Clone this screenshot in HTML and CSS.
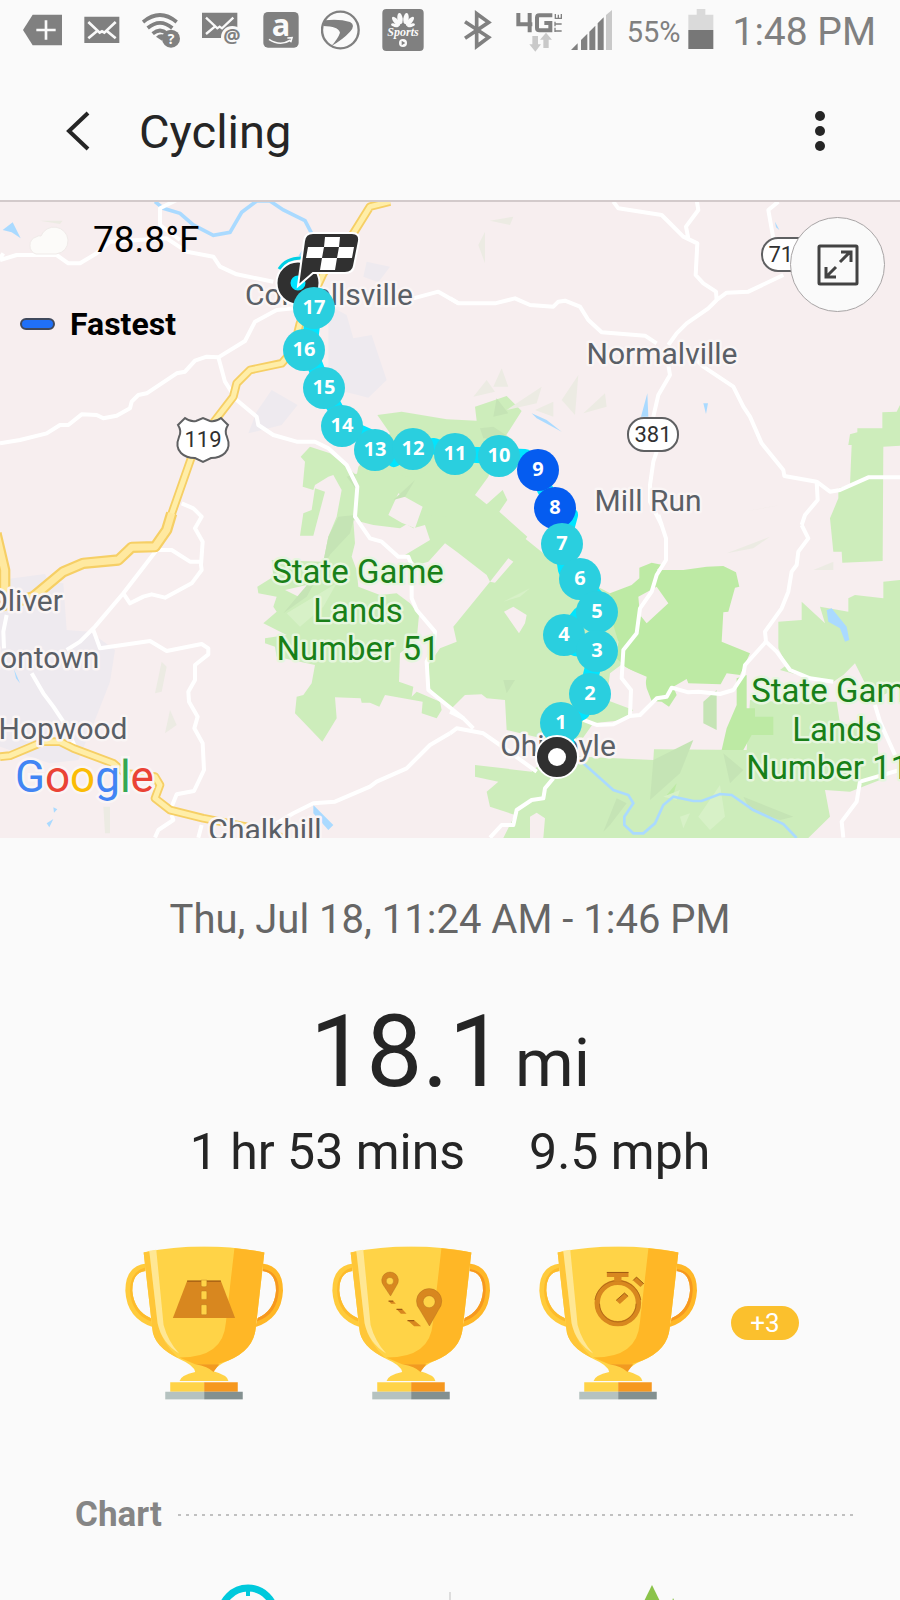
FILE: index.html
```html
<!DOCTYPE html>
<html lang="en">
<head>
    <meta charset="UTF-8">
    <meta name="viewport" content="width=device-width, initial-scale=1.0">
    <title>Cycling</title>
    <link rel="stylesheet" href="styles.css">
</head>
<body>
    <div class="app">
        <div class="status-bar">
            <div class="notifications">
                <svg width="39" height="44" viewBox="69 24 117 132"><path class="fill" d="M69 90L98 44H186V136H98Z"/><path class="cut" stroke-width="8" d="M109 90H167M138 61V119"/></svg>
                <svg width="36" height="44" viewBox="254 24 108 132"><path class="fill" d="M255 50H360V129H255Z"/><path class="cut" stroke-width="8" d="M267 66L301 98L308 94L315 98L349 66M267 115L297 90M349 115L319 90"/></svg>
                <svg width="38" height="44" viewBox="432 24 114 132"><path class="line" stroke-width="11" d="M435 66Q486 24 536 66M449 84Q486 53 523 84M464 101Q486 82 508 101"/><path class="fill" d="M474 110Q486 98 502 106L492 122Z"/><circle class="fill" cx="519" cy="116" r="27"/><text class="cut-text" x="519" y="131" font-size="42">?</text></svg>
                <svg width="39" height="44" viewBox="612 24 117 132"><path class="fill" d="M612 38H718V114H612Z"/><path class="cut" stroke-width="7" d="M624 53L658 85L665 80L672 85L706 53M624 102L654 77"/><circle cx="703" cy="112" r="34" fill="#fafafa"/><text class="gray-text" x="702" y="130" font-size="58">@</text></svg>
                <svg width="36" height="44" viewBox="794 24 108 132"><rect class="fill" x="795" y="36" width="106" height="107" rx="14"/><text class="cut-text" x="848" y="109" font-size="92">a</text><path class="cut" stroke-width="5" d="M812 118Q845 140 876 121M867 114L881 113L877 127"/></svg>
                <svg width="39" height="44" viewBox="969 24 117 132"><circle class="line" cx="1027" cy="90" r="55" stroke-width="7"/><path class="fill" d="M980 61Q1024 56 1056 66Q1074 76 1056 95Q1035 118 1000 138Q1020 116 1026 98Q1020 78 976 78Z"/></svg>
                <svg width="42" height="44" viewBox="1145 24 126 132"><rect class="fill" x="1146" y="27" width="124" height="126" rx="12"/><g fill="#fafafa"><ellipse cx="1199" cy="56" rx="8" ry="17" transform="rotate(-8 1199 56)"/><ellipse cx="1217" cy="56" rx="8" ry="17" transform="rotate(8 1217 56)"/><ellipse cx="1187" cy="64" rx="7" ry="17" transform="rotate(-40 1187 64)"/><ellipse cx="1229" cy="64" rx="7" ry="17" transform="rotate(40 1229 64)"/><ellipse cx="1184" cy="76" rx="5" ry="12" transform="rotate(-75 1184 76)"/><ellipse cx="1232" cy="76" rx="5" ry="12" transform="rotate(75 1232 76)"/><circle cx="1208" cy="129" r="12"/></g><path class="fill" d="M1204 122L1215 129L1204 136Z"/><text class="cut-text script" x="1208" y="108" font-size="36">Sports</text></svg>
            </div>
            <div class="system">
                <svg width="28" height="44" viewBox="45 24 84 132"><path class="line" stroke-width="11" d="M48 65L119 112L83 139V41L119 67L48 115"/></svg>
                <svg width="47" height="44" viewBox="203 24 141 132"><path class="line" stroke-width="12" d="M210 39V73H252M244 39V97M312 46H273Q266 46 266 53V84Q266 91 273 91H306V69H288"/><path class="line" stroke-width="4" d="M320 93H340M320 96V83M322 72H340M320 79V65M321 57V42M339 57V42M330 57V44M320 55H340"/><path fill="#c9c9c9" d="M252 108H269V133H278L261 155L243 133H252ZM285 144V119H275L293 98L311 119H301V144Z"/></svg>
                <svg width="42" height="44" viewBox="362 24 126 132"><path class="fill" d="M362 150L382 130V150ZM392 150V120L411 101V150ZM417 150V95L435 77V150ZM442 150V70L460 52V150Z"/><path fill="#c9c9c9" d="M467 150V45L485 30V150Z"/></svg>
                <span class="battery-level">55%</span>
                <svg width="26" height="44" viewBox="716 24 78 132"><path fill="#dadada" d="M742 27H768V44H792V90H717V44H742Z"/><path fill="#777" d="M717 90H792V147H717Z"/></svg>
                <time class="clock">1:48 PM</time>
            </div>
        </div>

        <header class="header">
            <button class="icon-button" aria-label="Back">
                <svg width="26" height="44" viewBox="0 0 26 44"><path d="M23 3L4 21L23 39" fill="none" stroke="#252525" stroke-width="4"/></svg>
            </button>
            <h1 class="title">Cycling</h1>
            <button class="icon-button" aria-label="More options">
                <svg width="12" height="44" viewBox="0 0 12 44"><g fill="#252525"><circle cx="6" cy="6" r="5"/><circle cx="6" cy="21" r="5"/><circle cx="6" cy="36" r="5"/></g></svg>
            </button>
        </header>

        <section class="map">
            <svg class="map-canvas" viewBox="0 2 900 636" preserveAspectRatio="xMidYMid slice">
                <g transform="scale(.33333)">
                    <!-- towns -->
                    <g fill="#eeeaef">
                        <path d="M1100 185L1170 200L1135 247L1090 230ZM985 315L1040 345L1060 415L1115 405L1160 540L1105 593L1035 575L985 525ZM815 570L893 615L845 675L745 700L770 635Z"/>
                        <path d="M0 1140L135 1122L145 1145L190 1150L200 1290L270 1295L345 1350L330 1445L285 1560L235 1680L150 1690L0 1640Z"/>
                    </g>
                    <!-- forest -->
                    <g fill="#cdedbb">
                        <path d="M1132 645L1205 635L1340 658L1430 662L1425 620L1520 588L1565 633L1500 735L1465 830L1425 885L1460 913L1508 870L1522 900L1498 935L1582 1010L1577 1017L1680 1100L1830 1180L1860 1240L1850 1370L1870 1390L1830 1420L1820 1500L1900 1530L1870 1560L1780 1570L1730 1640L1520 1590L1515 1500L1460 1495L1445 1483L1395 1485L1350 1530L1290 1465L1285 1395L1320 1345L1370 1325L1360 1280L1470 1145L1460 1125L1370 1055L1335 1030L1285 1085L1250 1095L1215 1065L1290 1020L1275 975L1240 985L1060 880L1075 800L1170 700Z"/>
                        <path d="M930 740L990 760L1040 800L1065 822L1150 810L1220 830L1350 800L1350 950L1265 945L1200 985L1120 975L1060 960L1065 1030L1055 1070L1070 1110L1075 1160L1140 1185L1190 1180L1230 1210L1257 1245L1250 1320L1200 1360L1197 1445L1240 1460L1235 1490L1250 1475L1320 1505L1325 1530L1310 1555L1265 1540L1268 1505L1155 1485L1138 1520L1110 1508L1085 1508L1082 1495L1005 1492L1010 1555L967 1625L885 1540L890 1490L910 1485L935 1450L945 1395L830 1370L825 1340L795 1330L795 1315L860 1305L790 1270L830 1235L820 1220L830 1190L775 1180L772 1160L820 1130L815 1080L970 1085L985 1010L1010 950L1025 870L1000 825L985 830L945 855L940 870L908 860L915 785L902 770Z"/>
                        <path d="M945 865L975 875L940 1007L900 1007L910 940L935 930Z"/>
                        <path d="M1425 1695L1595 1715L1650 1665L1750 1670L1960 1680L1962 1648L2240 1650L2250 1500L2335 1505L2510 1505L2520 1570L2630 1590L2640 1740L2550 1775L2475 1770L2490 1850L2425 1914L1510 1914L1545 1845L1470 1820L1460 1775L1495 1745L1425 1730Z"/>
                        <path d="M2335 1265L2405 1260L2405 1205L2475 1270L2460 1220L2545 1235L2545 1195L2565 1185L2650 1195L2650 1145L2700 1140V1460L2620 1500L2565 1390L2530 1425L2500 1445L2430 1435L2340 1410L2360 1395L2335 1345Z"/>
                        <path d="M2700 615L2690 635L2647 637V685H2572V697L2550 703L2545 735H2555L2550 855L2515 865V895L2490 955L2500 1055H2525L2527 1088L2648 1083L2650 740L2700 737Z"/>
                    </g>
                    <g fill="#bdeaa4">
                        <path d="M1830 1180L1895 1155L1918 1135L1918 1103L1955 1088L1988 1095L1970 1110H2050L2120 1100L2170 1098L2208 1117L2218 1160L2205 1163L2185 1235L2170 1237L2165 1325L2250 1360L2220 1425L2180 1420L2162 1453L2065 1450L2060 1437L2020 1460L2030 1485L2007 1520L1985 1505L1955 1503L1940 1465L1935 1435L1875 1400L1850 1375L1855 1325L1840 1275Z"/>
                        <path d="M2210 1435L2240 1425V1525H2265V1550H2320V1605H2255L2230 1650H2165L2180 1585L2210 1515Z"/>
                        <path d="M2000 1785L2030 1750L2020 1785Z"/>
                    </g>
                    <g fill="#f7eeef">
                        <path d="M1195 880L1268 920L1245 985L1205 968L1165 945ZM1915 1190L1970 1160L2005 1210L1940 1270L1920 1245ZM1512 1235L1540 1220L1580 1245L1575 1270L1557 1300ZM1470 1145L1525 1075L1540 1085L1485 1148ZM1590 1850L1610 1838L1635 1855L1630 1914H1590ZM855 1170L920 1155L905 1195ZM1850 1415L1870 1400L1940 1430L1935 1460L1880 1480Z"/>
                    </g>
                    <!-- relief -->
                    <g fill="#c5e4b5">
                        <path d="M1015 950L1065 945L1050 1000L970 1085L985 1010ZM1020 1010L920 1190L850 1240L900 1180L960 1110ZM1180 900L1245 840L1215 890ZM1040 830L1065 822L1070 870ZM1440 685L1480 680L1540 720L1450 715ZM1490 595L1525 640L1480 650Z"/>
                        <path d="M1510 1440H1545L1520 1480ZM1810 1895L1850 1795L1880 1810L1830 1875ZM1960 1680L2080 1620L2040 1720L1950 1800ZM2170 1660L2230 1710L2190 1750ZM2230 1790L2380 1850L2340 1860L2250 1830ZM2110 1505L2150 1470V1590L2110 1570Z"/>
                    </g>
                    <g fill="#ecebe3">
                        <path d="M120 62H188L180 72ZM1470 62L1540 50L1530 75ZM1435 135L1455 95V190ZM1420 590L1460 540L1485 575ZM1480 560L1505 505L1525 560ZM1520 630L1625 560L1610 610ZM1605 630L1660 605V650ZM1685 600L1735 525L1725 645ZM1750 640L1815 580L1820 620ZM2180 1060L2310 1010L2260 1045ZM2440 1110L2500 1085V1110ZM2230 935L2340 915L2290 925Z"/>
                        <path d="M485 1385L500 1400L485 1475L465 1480ZM510 1530L530 1575L495 1600ZM310 1820H330V1900H315Z"/>
                    </g>
                    <g fill="#d7f1c7"><path d="M1510 1205L1590 1165L1560 1190ZM2160 1755L2175 1850L2130 1890L2095 1850ZM2040 1850L2070 1840L2050 1885ZM1990 1790L2040 1770L2030 1800ZM900 1280L860 1240L1010 1150L970 1220Z"/></g>
                    <!-- water -->
                    <g fill="none" stroke="#aadaff" stroke-width="11">
                        <path d="M465 5L490 25L540 40L580 75L640 106L690 97L725 37L770 3H810L850 30L915 62L940 110L900 170" />
                        <path stroke-width="8" d="M1750 1690L1840 1770L1885 1785L1900 1810L1873 1850V1875L1900 1900H1930L1965 1870L1990 1815L2020 1790L2080 1803H2105L2160 1782L2195 1785L2260 1830L2350 1872L2390 1914"/>
                    </g>
                    <path fill="#aadaff" d="M8 90L38 67L62 115L35 97ZM1595 640L1640 660L1685 695L1610 655ZM1942 580L1945 650H1923ZM2110 610H2124L2118 642ZM2325 65L2338 90L2328 82ZM2480 1230L2495 1225L2540 1280L2548 1320L2535 1325L2520 1285L2485 1265ZM940 1815L1000 1875L985 1890L940 1840ZM160 1822L172 1828L162 1838ZM140 1870L160 1857L148 1882ZM42 1408L60 1450L48 1435Z"/>
                    <!-- local roads -->
                    <g fill="none" stroke="#fff" stroke-width="12" stroke-linejoin="round">
                        <g transform="translate(0 -15)">
                            <path d="M0 195L50 180H170L205 205H240L290 175L330 140L500 130L560 170L640 185L660 215L710 238L820 260M530 15L480 40V90L540 135M0 190L10 175"/>
                            <path d="M0 745L60 735L140 715L180 690H205L245 658L290 660L310 670L350 662L390 640L395 620L415 600L440 595L530 535L555 530L585 497L620 485L655 487L735 438L765 380L830 345L880 340M655 487L675 560L710 615L770 665L775 690L820 720L890 740H945L985 760L1040 810L1072 875L1065 965L1110 1030L1145 1040L1195 1085H1225L1235 1110V1210L1250 1245L1305 1310L1300 1360L1280 1400L1285 1485L1390 1570M1200 320L1240 310L1315 290L1375 325"/>
                            <path d="M545 925L580 940L605 965L585 1000L608 1040L603 1110L605 1125L575 1165L495 1208L455 1198L430 1205L390 1225L370 1195"/>
                        </g>
                        <g transform="translate(1350 -15)">
                            <path d="M0 310L25 325H135L195 310L240 330L310 335L325 320L345 317L390 335L415 375L455 412L585 422L620 445M490 20L505 40L635 60L700 125L742 145L737 240L760 265L798 290L800 315L775 340L710 385L680 415L655 450M800 315L830 293L895 290L1000 240M740 15L745 45L708 95L715 130M985 20L955 45L970 130"/>
                            <path d="M740 495L760 515L850 575L880 635L900 665L935 745L1000 825L1003 843L1100 860L1140 890L1170 885L1255 847H1350M1100 860L1103 915L1065 960L1055 990M655 510L660 540L625 600L610 665M620 770L610 800L600 870V920L635 990"/>
                        </g>
                        <g transform="translate(0 945)">
                            <path d="M470 105L370 235L285 335L240 380L200 405M470 105H515L570 140H600M280 345L300 400L450 378L500 408L605 387L625 400V418L585 450V495L565 530L567 560L593 605L583 640L608 685L612 765L582 828L530 838L515 875M515 900L520 915L475 945L465 968M605 930L595 968M20 300L10 350L12 400M95 475L130 535L160 575L190 620L225 695M1350 655L1290 690L1220 760L1130 800L1110 815L1005 860L940 865L880 895L830 925"/>
                        </g>
                        <g transform="translate(1350 945)">
                            <path d="M1055 30L1075 70L1045 110L1040 150L1025 170L1015 230L995 280L945 350L948 380L885 450L880 480L850 525L810 537L745 530L715 532L665 518L650 545L620 550L570 600L540 603L490 628L440 630L400 615M540 603L543 525L515 490L520 405L560 355L570 280L605 230L620 180L648 135V70L625 0M948 380L980 410L1020 465L1080 490L1150 500M1275 570L1290 620L1335 720L1350 740M1350 765L1230 800L1220 860L1175 920L1180 968M0 590L40 610L70 640M0 655L20 640L100 655L150 690L260 770M310 790L285 820L280 850L245 855L200 885L190 930L155 930L120 968"/>
                        </g>
                    </g>
                    <!-- highways -->
                    <g fill="none" stroke="#f6cf65" stroke-width="26" stroke-linejoin="round">
                        <path d="M1170 5L1110 20L1060 100L970 220L900 370L880 450L845 490L750 510L710 550L700 590L650 655L600 720L575 770L505 970M0 1670L30 1667L130 1625H180L220 1645L340 1690L375 1720L465 1730L480 1755L465 1795L510 1830L610 1855L740 1880L850 1914"/>
                        <path stroke-width="34" d="M515 940L500 990L465 1040L395 1042L355 1080L250 1090L190 1115L100 1190L0 1220M-12 1000L14 1110V1190"/>
                    </g>
                    <g fill="none" stroke="#ffeea8" stroke-width="15" stroke-linejoin="round">
                        <path d="M1170 5L1110 20L1060 100L970 220L900 370L880 450L845 490L750 510L710 550L700 590L650 655L600 720L575 770L505 970M0 1670L30 1667L130 1625H180L220 1645L340 1690L375 1720L465 1730L480 1755L465 1795L510 1830L610 1855L740 1880L850 1914"/>
                        <path stroke="#ffe9a0" stroke-width="21" d="M515 940L500 990L465 1040L395 1042L355 1080L250 1090L190 1115L100 1190L0 1220M-12 1000L14 1110V1190"/>
                    </g>
                </g>

                <!-- road signs -->
                <g class="shield">
                    <path d="M185 218Q190 222 196 221L203 218L210 221Q216 222 221 218L228 225Q224 231 227 237Q231 247 225 253Q220 258 211 258L203 262L195 258Q186 258 181 253Q175 247 179 237Q182 231 178 225Z"/>
                    <rect x="628" y="218" width="50" height="33" rx="16"/>
                    <rect x="762" y="38" width="52" height="33" rx="16"/>
                    <text x="203" y="247">119</text>
                    <text x="653" y="242">381</text>
                    <text x="787" y="62">711</text>
                </g>

                <g class="town">
                    <text x="329" y="105">Connellsville</text>
                    <text x="662" y="164">Normalville</text>
                    <text x="648" y="311">Mill Run</text>
                    <text x="25" y="411">Oliver</text>
                    <text x="28" y="468">Uniontown</text>
                    <text x="63" y="539">Hopwood</text>
                    <text x="265" y="640">Chalkhill</text>
                    <text x="558" y="556">Ohiopyle</text>
                </g>
                <g class="park">
                    <text x="358" y="383">State Game</text>
                    <text x="358" y="422">Lands</text>
                    <text x="358" y="460">Number 51</text>
                    <text x="837" y="502">State Game</text>
                    <text x="837" y="541">Lands</text>
                    <text x="837" y="579">Number 111</text>
                </g>
                <text class="google" x="15" y="592"><tspan fill="#4285f4">G</tspan><tspan fill="#ea4335">o</tspan><tspan fill="#fbbc05">o</tspan><tspan fill="#4285f4">g</tspan><tspan fill="#34a853">l</tspan><tspan fill="#ea4335">e</tspan></text>

                <!-- ride -->
                <path fill="none" stroke="#00e5ff" stroke-width="16" stroke-linejoin="round" d="M298 83L314 108L309 150L324 188L345 226L372 238L394 259L413 249L434 246L455 254L499 256L525 257L535 270L548 295L570 315L562 344L566 370L580 379L600 402L580 415L564 435L575 448L597 451L591 475L590 494L582 512L561 523L567 545L557 557"/>
                <circle cx="298" cy="83" r="15" fill="none" stroke="#fff" stroke-width="15"/>
                <path d="M279 69Q286 58 301 58" fill="none" stroke="#00cfe4" stroke-width="3"/>
                <circle cx="298" cy="83" r="14" fill="#00e5ff" stroke="#303030" stroke-width="13"/>
                <path d="M313 33H352Q360 33 359 41L354 66Q353 73 345 73H313L298 86L304 41Q305 33 313 33Z" fill="#303030" stroke="#fff" stroke-width="2"/>
                <path fill="#fff" fill-rule="evenodd" d="M325 37H340L339 47H354L352 58H337L335 70H320L322 58H306L308 47H324ZM324 47L322 58H337L339 47Z"/>
                <g class="pins">
                    <circle cx="314" cy="108" r="21"/><circle cx="304" cy="150" r="21"/><circle cx="324" cy="188" r="21"/><circle cx="342" cy="226" r="21"/><circle cx="375" cy="250" r="21"/><circle cx="413" cy="249" r="21"/><circle cx="455" cy="254" r="21"/><circle cx="499" cy="256" r="21"/>
                    <circle class="fastest" cx="538" cy="270" r="21"/><circle class="fastest" cx="555" cy="308" r="21"/>
                    <circle cx="562" cy="344" r="21"/><circle cx="580" cy="379" r="21"/><circle cx="597" cy="412" r="21"/><circle cx="564" cy="435" r="21"/><circle cx="597" cy="451" r="21"/><circle cx="590" cy="494" r="21"/><circle cx="561" cy="523" r="21"/>
                    <text x="314" y="114">17</text><text x="304" y="156">16</text><text x="324" y="194">15</text><text x="342" y="232">14</text><text x="375" y="256">13</text><text x="413" y="255">12</text><text x="455" y="260">11</text><text x="499" y="262">10</text><text x="538" y="276">9</text><text x="555" y="314">8</text><text x="562" y="350">7</text><text x="580" y="385">6</text><text x="597" y="418">5</text><text x="564" y="441">4</text><text x="597" y="457">3</text><text x="590" y="500">2</text><text x="561" y="529">1</text>
                </g>
                <circle cx="557" cy="557" r="21" fill="#303030" stroke="#fff" stroke-width="2"/>
                <circle cx="557" cy="557" r="9" fill="#fff"/>
            </svg>

            <div class="weather">
                <svg width="44" height="30" viewBox="0 0 44 30"><path d="M10 29A9 9 0 0 1 10 12Q13 10 15 11A14 14 0 0 1 42 15Q42 27 30 29Z" fill="#fcfbf9" stroke="#f0ebe9"/></svg>
                <span>78.8°F</span>
            </div>
            <div class="legend"><i class="legend-mark"></i><span>Fastest</span></div>
            <button class="expand" aria-label="Expand map">
                <svg width="42" height="42" viewBox="0 0 42 42"><g fill="none" stroke="#424242" stroke-width="3"><rect x="2" y="2" width="38" height="38" rx="1"/><path d="M23 18L33 8M24 8H34V18M19 23L9 33M9 23V33H19"/></g></svg>
            </button>
        </section>

        <main class="summary">
            <p class="date">Thu, Jul 18, 11:24 AM - 1:46 PM</p>
            <p class="distance"><span class="distance-value">18.1</span><span class="distance-unit">mi</span></p>
            <p class="pace"><span>1 hr 53 mins</span><span>9.5 mph</span></p>

            <svg width="0" height="0" class="defs">
                <symbol id="cup" viewBox="75 78 475 462">
                    <path d="M138 130Q76 138 76 212Q80 296 160 322L152 294Q102 272 97 212Q97 158 136 153Z" fill="#ffcb3c"/>
                    <path d="M136 142Q90 154 90 212Q94 284 156 305L152 294Q102 272 97 212Q97 158 136 153Z" fill="#fdbb2b"/>
                    <path d="M488 130Q550 138 550 212Q546 296 466 322L474 294Q524 272 529 212Q529 158 489 153Z" fill="#ffb726"/>
                    <path d="M489 147Q539 154 537 212Q534 282 472 304L474 294Q524 272 529 212Q529 158 489 153Z" fill="#f6981f"/>
                    <path d="M131 97Q220 79 313 79Q405 79 494 97L468 325Q462 390 386 422Q352 436 341 454Q384 466 386 483H239Q242 466 286 456Q282 436 240 418Q160 380 157 325Z" fill="#ffd347"/>
                    <path d="M404 84Q460 89 494 97L468 325Q462 390 386 422L352 433H286L238 413Q370 414 378 310Z" fill="#ffb726"/>
                    <path d="M131 97L148 93L173 310Q186 370 236 415Q160 380 157 325Z" fill="#ffc638"/>
                    <path d="M148 92L169 89L191 315Q204 364 238 401Q186 370 173 310Z" fill="#ffe794"/>
                    <path d="M286 433H358L341 456Q325 440 286 433Z" fill="#f29a20"/>
                    <path d="M211 487H313V516H211Z" fill="#ffd347"/><path d="M313 487H414V516H313Z" fill="#f6981f"/>
                    <path d="M196 516H313V539H196Z" fill="#b5c2c0"/><path d="M313 516H429V539H313Z" fill="#839090"/>
                </symbol>
            </svg>
            <div class="trophies">
                <svg width="158" height="154" viewBox="75 78 475 462">
                    <use href="#cup" x="75" y="78" width="475" height="462"/>
                    <path d="M262 182H363L406 294H219Z" fill="#d8871f"/><path d="M262 183H363" stroke="#9f5b13" stroke-width="4"/>
                    <g fill="#ffd347" stroke="#a86a1c" stroke-width="1"><path d="M304 180H321V196L317 200H308L304 196Z"/><rect x="304" y="213" width="17" height="25" rx="3"/><rect x="304" y="254" width="17" height="30" rx="3"/></g>
                </svg>
                <svg width="158" height="154" viewBox="75 78 475 462">
                    <use href="#cup" x="75" y="78" width="475" height="462"/>
                    <path fill="#d8871f" stroke="#a2601a" stroke-width="1" fill-rule="evenodd" d="M251 228L229 195A25 25 0 1 1 270 195ZM249 172A11 11 0 1 0 249 194A11 11 0 1 0 249 172ZM368 318L338 268A38 38 0 1 1 396 268ZM367 227A18 18 0 1 0 367 263A18 18 0 1 0 367 227Z"/>
                    <path fill="#d8871f" d="M245 243H259L267 251H253ZM269 267H286L299 281H282ZM302 301H322L343 319H322Z"/><path d="M245 243H259M269 268H286M302 302H322" stroke="#9f5b13" stroke-width="4"/>
                </svg>
                <svg width="158" height="154" viewBox="75 78 475 462">
                    <use href="#cup" x="75" y="78" width="475" height="462"/>
                    <circle cx="312" cy="249" r="62" fill="none" stroke="#d8871f" stroke-width="16"/><path d="M243 240A70 70 0 0 1 381 240" fill="none" stroke="#9f5b13" stroke-width="2"/>
                    <path d="M257 251A54 54 0 0 0 367 251" fill="none" stroke="#9f5b13" stroke-width="2"/>
                    <path d="M279 156H344V171H323V184H301V171H279ZM307 241L332 219L343 229L318 252ZM358 181L368 171L390 191L380 201Z" fill="#d8871f"/><path d="M279 157H344M358 181L368 171L390 191M307 241L332 219L343 229" fill="none" stroke="#9f5b13" stroke-width="3"/>
                </svg>
                <button class="more">+3</button>
            </div>

            <h2 class="section-title">Chart</h2>
            <div class="stats">
                <svg width="62" height="62" viewBox="0 0 62 62"><circle cx="31" cy="31" r="27" fill="none" stroke="#00c9dc" stroke-width="7"/><path d="M31 6V12M31 31V18" stroke="#00c9dc" stroke-width="4"/></svg>
                <svg width="72" height="62" viewBox="0 0 72 62"><path d="M35 1L64 60H6Z" fill="#8bc34a"/><path d="M56 14L72 46V60H44Z" fill="#8bc34a"/></svg>
            </div>
        </main>
    </div>
</body>
</html>
```
FILE: styles.css
```css
        * {
            box-sizing: border-box;
        }

        body {
            font-family: Roboto, "Liberation Sans", sans-serif;
            margin: 0;
            background-color: #fafafa;
            color: #252525;
        }

        h1, h2, p {
            margin: 0;
            font-weight: 400;
        }

        button {
            border: none;
            padding: 0;
            background: none;
            font-family: inherit;
            cursor: pointer;
        }

        svg {
            display: block;
            flex-shrink: 0;
        }

        .app {
            height: 100vh;
            overflow: hidden;
        }

        /* status bar */
        .status-bar {
            display: flex;
            justify-content: space-between;
            align-items: center;
            height: 60px;
            padding: 0 24px 0 23px;
            color: #808080;
        }

        .notifications {
            display: flex;
            gap: 22px;
        }

        .system {
            display: flex;
            align-items: center;
        }

        .system svg + svg {
            margin-left: 8px;
        }

        .system svg:first-child {
            margin-right: 16px;
        }

        .battery-level {
            font-size: 29px;
            line-height: 44px;
            margin: 4px 8px 0 14px;
        }

        .clock {
            font-size: 39px;
            line-height: 44px;
            margin: 4px 0 0 18px;
        }

        .fill {
            fill: #808080;
        }

        .line {
            fill: none;
            stroke: #808080;
        }

        .cut {
            fill: none;
            stroke: #fafafa;
        }

        .cut-text, .gray-text {
            fill: #fafafa;
            font-family: "Open Sans", sans-serif;
            font-weight: 700;
            text-anchor: middle;
        }

        .gray-text {
            fill: #808080;
        }

        .script {
            font-family: "Liberation Serif", serif;
            font-style: italic;
        }

        /* header */
        .header {
            display: flex;
            align-items: center;
            height: 142px;
            padding: 3px 74px 0 65px;
            border-bottom: 2px solid #d3cacb;
        }

        .title {
            flex: 1;
            margin-left: 48px;
            font-size: 47px;
            line-height: 56px;
        }

        /* map */
        .map {
            position: relative;
            height: 636px;
            overflow: hidden;
            background: #f7eeef;
        }

        .map-canvas {
            width: 100%;
            height: 100%;
        }

        .town, .park {
            font-size: 30px;
            text-anchor: middle;
            fill: #5a5f66;
            stroke: #faf5f5;
            stroke-width: 5px;
            stroke-linejoin: round;
            paint-order: stroke;
        }

        .park {
            font-size: 33px;
            fill: #188018;
            stroke: #e6f6de;
        }

        .shield {
            fill: #fff;
            stroke: #5f6062;
            stroke-width: 2px;
        }

        .shield text {
            font-size: 22px;
            fill: #303030;
            stroke: none;
            text-anchor: middle;
        }

        .google {
            font-size: 44px;
            font-weight: 400;
            stroke: #faf5f5;
            stroke-width: 5px;
            paint-order: stroke;
        }

        .pins {
            fill: #2acfdf;
        }

        .pins .fastest {
            fill: #055cf0;
        }

        .pins text {
            fill: #fff;
            font-family: "Open Sans", sans-serif;
            font-size: 20px;
            font-weight: 700;
            text-anchor: middle;
        }

        .weather, .legend {
            position: absolute;
            display: flex;
            align-items: center;
            color: #000;
        }

        .weather {
            top: 16px;
            left: 26px;
            gap: 23px;
            font-size: 37px;
            line-height: 44px;
        }

        .legend {
            top: 102px;
            left: 20px;
            gap: 15px;
            font-size: 32px;
            line-height: 40px;
            font-weight: 700;
        }

        .legend-mark {
            width: 35px;
            height: 12px;
            border: 2px solid #40495c;
            border-radius: 6px;
            background: #2070f8;
        }

        .expand {
            position: absolute;
            top: 15px;
            right: 15px;
            display: flex;
            justify-content: center;
            align-items: center;
            width: 95px;
            height: 95px;
            border: 1px solid #a8a4a5;
            border-radius: 50%;
            background: #fafafa;
        }

        /* workout summary */
        .summary {
            text-align: center;
        }

        .date {
            padding-top: 58px;
            font-size: 40px;
            line-height: 48px;
            color: #666;
        }

        .distance {
            display: flex;
            justify-content: center;
            align-items: baseline;
            gap: 10px;
            margin-top: 50px;
            line-height: 116px;
        }

        .distance-value {
            font-size: 100px;
        }

        .distance-unit {
            font-size: 67px;
        }

        .pace {
            display: flex;
            justify-content: center;
            gap: 64px;
            margin-top: 1px;
            font-size: 50px;
            line-height: 60px;
        }

        .defs {
            position: absolute;
        }

        .trophies {
            display: flex;
            justify-content: center;
            align-items: center;
            gap: 49px;
            margin-top: 64px;
            padding-left: 24px;
        }

        .more {
            width: 68px;
            height: 34px;
            margin-left: -15px;
            border-radius: 17px;
            background: #fbc02d;
            color: #fff;
            font-size: 26px;
            line-height: 34px;
        }

        .section-title {
            display: flex;
            align-items: center;
            gap: 16px;
            margin-top: 94px;
            padding: 0 46px 0 75px;
            font-size: 35px;
            line-height: 42px;
            font-weight: 700;
            color: #858585;
        }

        .section-title::after {
            content: "";
            flex: 1;
            height: 2px;
            background: repeating-linear-gradient(90deg, #c0c0c0 0 3px, transparent 3px 8px);
        }

        .stats {
            display: grid;
            grid-template-columns: 1fr 1fr;
            justify-items: center;
            margin-top: 48px;
            padding: 0 45px;
            background: linear-gradient(#ddd, #ddd) 50% 8px / 2px 100% no-repeat;
        }
```
